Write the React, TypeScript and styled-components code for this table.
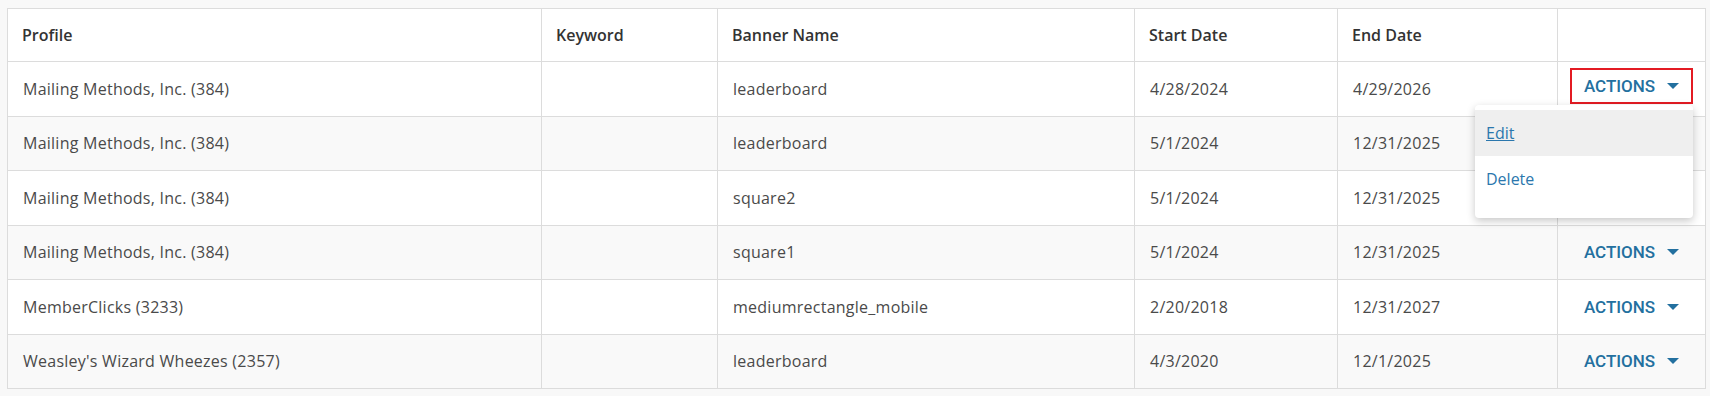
import { createGlobalStyle, styled } from "styled-components";

const GlobalStyle = createGlobalStyle`
  html, body {
    margin: 0;
    padding: 0;
    background: #f8f8f8;
  }
  body {
    font-family: "Open Sans", "Noto Sans", sans-serif;
  }
`;

interface Banner {
  profile: string;
  keyword: string;
  banner: string;
  start: string;
  end: string;
}

const rows: Banner[] = [
  { profile: "Mailing Methods, Inc. (384)", keyword: "", banner: "leaderboard", start: "4/28/2024", end: "4/29/2026" },
  { profile: "Mailing Methods, Inc. (384)", keyword: "", banner: "leaderboard", start: "5/1/2024", end: "12/31/2025" },
  { profile: "Mailing Methods, Inc. (384)", keyword: "", banner: "square2", start: "5/1/2024", end: "12/31/2025" },
  { profile: "Mailing Methods, Inc. (384)", keyword: "", banner: "square1", start: "5/1/2024", end: "12/31/2025" },
  { profile: "MemberClicks (3233)", keyword: "", banner: "mediumrectangle_mobile", start: "2/20/2018", end: "12/31/2027" },
  { profile: "Weasley's Wizard Wheezes (2357)", keyword: "", banner: "leaderboard", start: "4/3/2020", end: "12/1/2025" },
];

const columns = [
  { label: "Profile", width: 534 },
  { label: "Keyword", width: 176 },
  { label: "Banner Name", width: 417 },
  { label: "Start Date", width: 203 },
  { label: "End Date", width: 220 },
  { label: "", width: 148 },
];

export default function App(): JSX.Element {
  return (
    <>
      <GlobalStyle />
      <Page>
        <Table>
          <colgroup>
            {columns.map((c, idx) => (
              <col key={idx} style={{ width: c.width }} />
            ))}
          </colgroup>
          <thead>
            <tr>
              {columns.map((c, idx) => (
                <HeadCell key={idx}>{c.label}</HeadCell>
              ))}
            </tr>
          </thead>
          <tbody>
            {rows.map((row, idx) => (
              <Row key={idx} $striped={idx % 2 === 1}>
                <Cell>{row.profile}</Cell>
                <Cell>{row.keyword}</Cell>
                <Cell>{row.banner}</Cell>
                <Cell>{row.start}</Cell>
                <Cell>{row.end}</Cell>
                <ActionCell>
                  <ActionsButton $focused={idx === 0}>
                    ACTIONS
                    <Caret />
                  </ActionsButton>
                  {idx === 0 && (
                    <Menu>
                      <MenuItem $active>Edit</MenuItem>
                      <MenuItem>Delete</MenuItem>
                    </Menu>
                  )}
                </ActionCell>
              </Row>
            ))}
          </tbody>
        </Table>
      </Page>
    </>
  );
}

const Page = styled.div`
  padding: 8px 5px 0 7px;
`;

const Table = styled.table`
  width: 1698px;
  border-collapse: collapse;
  table-layout: fixed;
  background: #fff;
  border: 1px solid #dcdcdc;
`;

const HeadCell = styled.th`
  height: 52px;
  padding: 0 14px;
  text-align: left;
  font-size: 16px;
  font-weight: 600;
  color: #333;
  border: 1px solid #dcdcdc;
  background: #fff;
`;

const Row = styled.tr<{ $striped?: boolean }>`
  background: ${(props) => (props.$striped ? "#f9f9f9" : "#fff")};
`;

const Cell = styled.td`
  height: 53.5px;
  padding: 0 14px 0 15px;
  font-size: 16px;
  letter-spacing: 0.25px;
  color: #4a4a4a;
  border: 1px solid #dcdcdc;
  white-space: nowrap;
`;

const ActionCell = styled(Cell)`
  position: relative;
  padding: 0 12px;
  letter-spacing: 0;
`;

const ActionsButton = styled.div<{ $focused?: boolean }>`
  box-sizing: border-box;
  display: flex;
  align-items: center;
  justify-content: center;
  gap: 12px;
  width: 123px;
  height: 36px;
  margin-bottom: ${(props) => (props.$focused ? "6px" : "0")};
  font-family: Roboto, "Liberation Sans", sans-serif;
  font-size: 17px;
  font-weight: 500;
  color: #23709f;
  border: 2px solid ${(props) => (props.$focused ? "#e31b23" : "transparent")};
`;

const Caret = styled.span`
  width: 0;
  height: 0;
  border-left: 6px solid transparent;
  border-right: 6px solid transparent;
  border-top: 6px solid #23709f;
`;

const Menu = styled.div`
  position: absolute;
  z-index: 5;
  top: 43px;
  left: -83px;
  width: 218px;
  padding: 5px 0 16px;
  background: #fff;
  border-radius: 4px;
  box-shadow: 0 3px 8px rgba(0, 0, 0, 0.22);
`;

const MenuItem = styled.div<{ $active?: boolean }>`
  height: 46px;
  padding: 0 11px;
  display: flex;
  align-items: center;
  font-size: 16px;
  color: #2b77ad;
  background: ${(props) => (props.$active ? "#efefef" : "transparent")};
  text-decoration: ${(props) => (props.$active ? "underline" : "none")};
`;
